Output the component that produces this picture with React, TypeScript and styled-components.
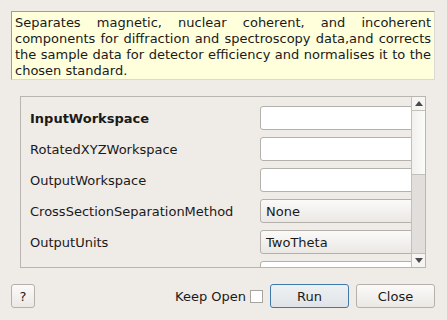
import React from 'react';
import styled, { createGlobalStyle } from 'styled-components';

const GlobalStyle = createGlobalStyle`
  html, body {
    margin: 0;
    padding: 0;
    background: #efebe7;
  }
  * {
    box-sizing: border-box;
  }
`;

// Dialog window
const Dialog = styled.div`
  width: 447px;
  height: 320px;
  background: #efebe7;
  font-family: 'DejaVu Sans', sans-serif;
  font-size: 13px;
  color: #1a1a1a;
  display: flex;
  flex-direction: column;
  padding: 11px 12px 0 11px;
  overflow: hidden;
`;

// Yellow description box at the top
const Description = styled.div`
  height: 69px;
  background: #ffffdc;
  border-style: solid;
  border-width: 1px;
  border-color: #a09d98 #dcd8d3 #dcd8d3 #a09d98;
  padding: 3px 3px 0 3px;
  line-height: 16px;
  text-align: justify;
`;

// Scroll area holding the property rows
const PropertyPanel = styled.div`
  margin: 16px 9px 0 9px;
  height: 172px;
  border: 1px solid #b9b5b0;
  display: flex;
`;

const RowsViewport = styled.div`
  flex: 1;
  overflow: hidden;
  padding: 9px 0 0 9px;
  display: flex;
  flex-direction: column;
  gap: 7px;
`;

const Row = styled.div`
  display: flex;
  align-items: center;
  height: 24px;
  flex-shrink: 0;
`;

const Label = styled.span<{ $bold?: boolean }>`
  width: 230px;
  flex-shrink: 0;
  font-weight: ${(p) => (p.$bold ? 'bold' : 'normal')};
  white-space: nowrap;
`;

const TextField = styled.div`
  width: 170px;
  height: 24px;
  flex-shrink: 0;
  background: #ffffff;
  border: 1px solid #b4b0ab;
  border-radius: 3px;
`;

const Combo = styled.div`
  width: 170px;
  height: 24px;
  flex-shrink: 0;
  background: linear-gradient(#fbfaf9, #ebe8e4);
  border: 1px solid #b4b0ab;
  border-radius: 3px;
  padding-left: 5px;
  display: flex;
  align-items: center;
`;

// Vertical scrollbar
const ScrollBar = styled.div`
  width: 14px;
  border-left: 1px solid #c3bfba;
  display: flex;
  flex-direction: column;
`;

const ArrowButton = styled.div`
  height: 13px;
  background: #f6f5f3;
  display: flex;
  align-items: center;
  justify-content: center;
`;

const Handle = styled.div`
  height: 65px;
  background: linear-gradient(90deg, #f2f0ee, #fbfbfa);
  border-top: 1px solid #c3bfba;
  border-bottom: 1px solid #c3bfba;
`;

const Groove = styled.div`
  flex: 1;
  background: #e1dedb;
  border-bottom: 1px solid #c3bfba;
`;

// Bottom button row
const Footer = styled.div`
  margin-top: 16px;
  display: flex;
  align-items: center;
  height: 24px;
`;

const ActionGroup = styled.div`
  display: flex;
  align-items: center;
  gap: 7px;
`;

const Button = styled.button<{ $default?: boolean; $w: number }>`
  width: ${(p) => p.$w}px;
  height: 24px;
  font-family: 'DejaVu Sans', sans-serif;
  font-size: 13px;
  color: #1a1a1a;
  border-radius: 3px;
  border: 1px solid ${(p) => (p.$default ? '#3d7aab' : '#b4b0ab')};
  background: ${(p) =>
    p.$default ? 'linear-gradient(#eef1f3, #e0e4e8)' : 'linear-gradient(#fbfaf9, #ebe8e4)'};
  padding: 0;
`;

const Spacer = styled.div`
  flex: 1;
`;

const CheckLabel = styled.span`
  margin-right: -3px;
`;

const CheckBox = styled.div`
  width: 13px;
  height: 13px;
  background: #ffffff;
  border: 1px solid #a8a49f;
`;

const Arrow: React.FC<{ up?: boolean }> = ({ up }) => (
  <svg width="8" height="5" viewBox="0 0 8 5">
    <polygon points={up ? '0,5 8,5 4,0' : '0,0 8,0 4,5'} fill="#4a4a4a" />
  </svg>
);

const rows = [
  { label: 'InputWorkspace', bold: true },
  { label: 'RotatedXYZWorkspace' },
  { label: 'OutputWorkspace' },
  { label: 'CrossSectionSeparationMethod', combo: 'None' },
  { label: 'OutputUnits', combo: 'TwoTheta' },
  { label: '' },
];

const App: React.FC = () => (
  <>
    <GlobalStyle />
    <Dialog>
      <Description>
        Separates magnetic, nuclear coherent, and incoherent components for diffraction and
        spectroscopy data,and corrects the sample data for detector efficiency and normalises it
        to the chosen standard.
      </Description>

      <PropertyPanel>
        <RowsViewport>
          {rows.map((r, i) => (
            <Row key={i}>
              <Label $bold={r.bold}>{r.label}</Label>
              {r.combo !== undefined ? <Combo>{r.combo}</Combo> : <TextField />}
            </Row>
          ))}
        </RowsViewport>
        <ScrollBar>
          <ArrowButton>
            <Arrow up />
          </ArrowButton>
          <Handle />
          <Groove />
          <ArrowButton>
            <Arrow />
          </ArrowButton>
        </ScrollBar>
      </PropertyPanel>

      <Footer>
        <Button $w={24}>?</Button>
        <Spacer />
        <ActionGroup>
          <CheckLabel>Keep Open</CheckLabel>
          <CheckBox />
          <Button $w={79} $default>
            Run
          </Button>
          <Button $w={79}>Close</Button>
        </ActionGroup>
      </Footer>
    </Dialog>
  </>
);

export default App;
